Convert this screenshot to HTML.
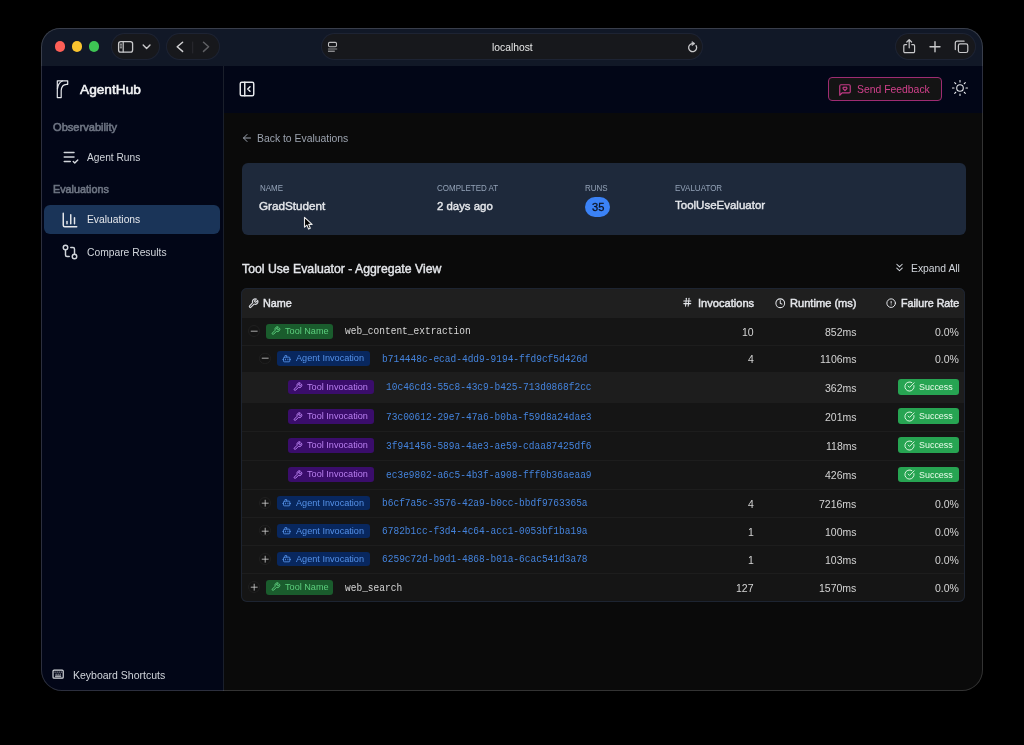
<!DOCTYPE html>
<html><head><meta charset="utf-8">
<style>
*{box-sizing:border-box;margin:0;padding:0}
html,body{width:1024px;height:745px;background:#000;overflow:hidden;font-family:"Liberation Sans",sans-serif}
.a{position:absolute}
.t{position:absolute;white-space:nowrap;line-height:1;will-change:transform}
.m{font-family:"Liberation Mono",monospace;transform:scaleY(1.12);transform-origin:0 76%}
svg{position:absolute;overflow:visible}
</style></head><body>

<div class="a" style="left:41px;top:28px;width:942px;height:663px;border-radius:19px 19px 21px 21px;overflow:hidden;background:#0a0a0a">
<div class="a" style="left:-41px;top:-28px;width:1024px;height:745px">
<div class="a" style="left:0;top:28px;width:1024px;height:38px;background:#111827"></div>
<div class="a" style="left:54.7px;top:41.45px;width:10.6px;height:10.6px;border-radius:6px;background:#fe5f57"></div>
<div class="a" style="left:71.7px;top:41.45px;width:10.6px;height:10.6px;border-radius:6px;background:#f9c32f"></div>
<div class="a" style="left:88.7px;top:41.45px;width:10.6px;height:10.6px;border-radius:6px;background:#3ec454"></div>
<div class="a" style="left:112px;top:34px;width:47px;height:25px;border-radius:12.5px;background:#17181c;box-shadow:0 0 0 1px #1d2333"></div>
<div class="a" style="left:166.5px;top:34px;width:52.5px;height:25px;border-radius:12.5px;background:#17181c;box-shadow:0 0 0 1px #1d2333"></div>
<div class="a" style="left:322px;top:34px;width:380px;height:25px;border-radius:12.5px;background:#17181c;box-shadow:0 0 0 1px #1d2333"></div>
<div class="a" style="left:896px;top:34px;width:79px;height:25px;border-radius:12.5px;background:#17181c;box-shadow:0 0 0 1px #1d2333"></div>
<svg style="left:0;top:0" width="1024" height="70" viewBox="0 0 1024 70" fill="none" stroke-linecap="round" stroke-linejoin="round"><rect x="118.6" y="41.6" width="14" height="10.6" rx="2.2" stroke="#c9c9cb" stroke-width="1.3"/><path d="M123.2 41.8v10.2" stroke="#c9c9cb" stroke-width="1.2"/><path d="M120.2 44.2h1.4M120.2 46h1.4M120.2 47.8h1.4" stroke="#c9c9cb" stroke-width="0.9"/><path d="M143.2 45 146.6 48.4 150 45" stroke="#c9c9cb" stroke-width="1.4"/><path d="M182.6 42.2 177.2 46.8 182.6 51.4" stroke="#d0d0d2" stroke-width="1.5"/><path d="M192.7 42v11" stroke="#2a2b30" stroke-width="1"/><path d="M203.5 42.2 208.6 46.8 203.5 51.4" stroke="#5e5f63" stroke-width="1.5"/><rect x="328.5" y="42.4" width="8" height="4.4" rx="1.2" stroke="#bdbdbf" stroke-width="1.1"/><path d="M328.4 49h8.4" stroke="#8e8e90" stroke-width="1"/><path d="M328.4 51.2h6" stroke="#bdbdbf" stroke-width="1"/><path d="M696.1 45.6A4 4 0 1 1 692.6 43.6" stroke="#c9c9cb" stroke-width="1.3"/><path d="M692.3 41.7 695 43.6 692.3 45.5Z" fill="#c9c9cb" stroke="#c9c9cb" stroke-width="0.6"/><path d="M906.6 44.6h-1.6a1.2 1.2 0 0 0-1.2 1.2v5.6a1.2 1.2 0 0 0 1.2 1.2h8.4a1.2 1.2 0 0 0 1.2-1.2v-5.6a1.2 1.2 0 0 0-1.2-1.2h-1.6" stroke="#c9c9cb" stroke-width="1.2"/><path d="M909.2 47.8V39.8M906.8 42 909.2 39.6 911.6 42" stroke="#c9c9cb" stroke-width="1.2"/><path d="M935 41.8v10M930 46.8h10" stroke="#c9c9cb" stroke-width="1.4"/><rect x="958.4" y="43.9" width="9.4" height="8.6" rx="1.8" stroke="#c9c9cb" stroke-width="1.2"/><path d="M955.3 49.6v-6.4a2 2 0 0 1 2-2h6.8" stroke="#c9c9cb" stroke-width="1.2"/></svg>
<div class="t" style="left:492.30px;top:42.95px;font-size:10.3px;color:#e8e8e8">localhost</div>
<div class="a" style="left:41px;top:66px;width:182px;height:625px;background:#020617"></div>
<div class="a" style="left:223px;top:66px;width:1px;height:625px;background:#1a1f2b"></div>
<svg style="left:0;top:0" width="100" height="100" viewBox="0 0 100 100" fill="none" stroke="#e5e7eb" stroke-width="1.2" stroke-linejoin="round" stroke-linecap="round"><path d="M57.3 97.6V80.8H67.7V84.3H66.5Q61.6 84.6 61.2 90.5V97.6Z"/><path d="M57.5 88.5Q58.3 82.6 62.3 81" stroke-width="1.3"/></svg>
<div class="t" style="left:79.60px;top:83.36px;font-size:13.7px;-webkit-text-stroke:0.55px #f3f4f6;color:#f3f4f6">AgentHub</div>
<div class="t" style="left:52.60px;top:122.06px;font-size:11.1px;-webkit-text-stroke:0.6px #6e7583;color:#6e7583">Observability</div>
<svg style="left:61.5px;top:147.5px;color:#d1d5db" width="18" height="18" viewBox="0 0 24 24" fill="none" stroke="currentColor" stroke-width="1.95" stroke-linecap="round" stroke-linejoin="round"><path d="M11 18H3"/><path d="m15 18 2 2 4-4"/><path d="M16 12H3"/><path d="M16 6H3"/></svg>
<div class="t" style="left:86.60px;top:152.83px;font-size:10.2px;color:#d1d5db">Agent Runs</div>
<div class="t" style="left:52.80px;top:184.22px;font-size:10.8px;-webkit-text-stroke:0.6px #6e7583;color:#6e7583">Evaluations</div>
<div class="a" style="left:44px;top:205px;width:175.5px;height:29px;border-radius:6px;background:#1a3458"></div>
<svg style="left:61.1px;top:210.5px;color:#e5e7eb" width="18" height="18" viewBox="0 0 24 24" fill="none" stroke="currentColor" stroke-width="1.95" stroke-linecap="round" stroke-linejoin="round"><path d="M3 3v16a2 2 0 0 0 2 2h16"/><path d="M18 17V9"/><path d="M13 17V5"/><path d="M8 17v-3"/></svg>
<div class="t" style="left:86.60px;top:215.44px;font-size:10.3px;color:#e5e7eb">Evaluations</div>
<svg style="left:61.1px;top:242.6px;color:#d1d5db" width="18" height="18" viewBox="0 0 24 24" fill="none" stroke="currentColor" stroke-width="1.95" stroke-linecap="round" stroke-linejoin="round"><circle cx="18" cy="18" r="3"/><circle cx="6" cy="6" r="3"/><path d="M13 6h3a2 2 0 0 1 2 2v7"/><path d="M11 18H8a2 2 0 0 1-2-2V9"/></svg>
<div class="t" style="left:86.60px;top:247.84px;font-size:10.3px;color:#d1d5db">Compare Results</div>
<svg style="left:52.4px;top:667.8px;color:#dadde2" width="12.25" height="12.25" viewBox="0 0 24 24" fill="none" stroke="currentColor" stroke-width="2.3" stroke-linecap="round" stroke-linejoin="round"><path d="M10 8h.01"/><path d="M12 12h.01"/><path d="M14 8h.01"/><path d="M16 12h.01"/><path d="M18 8h.01"/><path d="M6 8h.01"/><path d="M7 16h10"/><path d="M8 12h.01"/><rect width="20" height="16" x="2" y="4" rx="2"/></svg>
<div class="t" style="left:73.20px;top:670.18px;font-size:10.5px;color:#d1d5db">Keyboard Shortcuts</div>
<div class="a" style="left:224px;top:66px;width:760px;height:47px;background:#020617"></div>
<svg style="left:238.2px;top:79.6px;color:#e5e7eb" width="18" height="18" viewBox="0 0 24 24" fill="none" stroke="currentColor" stroke-width="1.95" stroke-linecap="round" stroke-linejoin="round"><rect width="18" height="18" x="3" y="3" rx="2"/><path d="M9 3v18"/><path d="m16 15-3-3 3-3"/></svg>
<div class="a" style="left:828px;top:77px;width:114px;height:24px;border-radius:4px;background:#141414;border:1px solid #9e2c72"></div>
<svg style="left:838.3px;top:82.6px;color:#c43a86" width="14" height="14" viewBox="0 0 24 24" fill="none" stroke="currentColor" stroke-width="2" stroke-linecap="round" stroke-linejoin="round"><path d="M21 15a2 2 0 0 1-2 2H7l-4 4V5a2 2 0 0 1 2-2h14a2 2 0 0 1 2 2z"/><path d="M14.8 7.5a1.84 1.84 0 0 0-2.6 0l-.2.3-.3-.3a1.84 1.84 0 1 0-2.4 2.8L12 13l2.7-2.7c.9-.9.8-2.1.1-2.8"/></svg>
<div class="t" style="left:857.30px;top:84.86px;font-size:10.4px;color:#d0408b">Send Feedback</div>
<svg style="left:950.5px;top:79.45px;color:#e5e7eb" width="18" height="18" viewBox="0 0 24 24" fill="none" stroke="currentColor" stroke-width="1.45" stroke-linecap="round" stroke-linejoin="round"><circle cx="12" cy="12" r="4.4"/><path d="M12 2v2"/><path d="M12 20v2"/><path d="m4.93 4.93 1.41 1.41"/><path d="m17.66 17.66 1.41 1.41"/><path d="M2 12h2"/><path d="M20 12h2"/><path d="m6.34 17.66-1.41 1.41"/><path d="m19.07 4.93-1.41 1.41"/></svg>
<svg style="left:240.8px;top:132.4px;color:#9ca3af" width="12" height="12" viewBox="0 0 24 24" fill="none" stroke="currentColor" stroke-width="2" stroke-linecap="round" stroke-linejoin="round"><path d="m12 19-7-7 7-7"/><path d="M19 12H5"/></svg>
<div class="t" style="left:257.30px;top:133.76px;font-size:10.4px;color:#9ca3af">Back to Evaluations</div>
<div class="a" style="left:241.5px;top:163.2px;width:724px;height:72px;border-radius:6px;background:#1e293b"></div>
<div class="t" style="left:259.50px;top:185.10px;font-size:8.0px;color:#94a3b8;transform:scaleY(1.14);transform-origin:0 85%">NAME</div>
<div class="t" style="left:437.40px;top:185.10px;font-size:8.0px;color:#94a3b8;transform:scaleY(1.14);transform-origin:0 85%">COMPLETED AT</div>
<div class="t" style="left:585.40px;top:185.10px;font-size:8.0px;color:#94a3b8;transform:scaleY(1.14);transform-origin:0 85%">RUNS</div>
<div class="t" style="left:674.70px;top:185.10px;font-size:8.0px;color:#94a3b8;transform:scaleY(1.14);transform-origin:0 85%">EVALUATOR</div>
<div class="t" style="left:259.40px;top:200.25px;font-size:11.7px;-webkit-text-stroke:0.4px #e5e7eb;color:#e5e7eb">GradStudent</div>
<div class="t" style="left:437.40px;top:200.51px;font-size:11.4px;-webkit-text-stroke:0.4px #e5e7eb;color:#e5e7eb">2 days ago</div>
<div class="t" style="left:674.60px;top:200.42px;font-size:11.5px;-webkit-text-stroke:0.4px #e5e7eb;color:#e5e7eb">ToolUseEvaluator</div>
<div class="a" style="left:585.3px;top:196.8px;width:24.9px;height:20.4px;border-radius:10.2px;background:#3b82f6"></div>
<div class="t" style="left:591.80px;top:202.26px;font-size:11.1px;-webkit-text-stroke:0.3px #0b1220;color:#0b1220">35</div>
<svg style="left:0;top:0" width="400" height="260" viewBox="0 0 400 260"><path d="M304.5 217.3V227.2L306.9 225.1 308.6 229.1 310.3 228.3 308.7 224.4H312.1Z" fill="#000" stroke="#e8e8e8" stroke-width="1.1" stroke-linejoin="round"/></svg>
<div class="t" style="left:242.40px;top:262.89px;font-size:12.25px;-webkit-text-stroke:0.4px #e5e7eb;color:#e5e7eb">Tool Use Evaluator - Aggregate View</div>
<svg style="left:893.2px;top:261.3px;color:#d1d5db" width="13" height="13" viewBox="0 0 24 24" fill="none" stroke="currentColor" stroke-width="1.9" stroke-linecap="round" stroke-linejoin="round"><path d="m7 6 5 5 5-5"/><path d="m7 13 5 5 5-5"/></svg>
<div class="t" style="left:910.60px;top:263.80px;font-size:10.35px;color:#d1d5db">Expand All</div>
<div class="a" style="left:241.3px;top:288px;width:724.0px;height:313.6px;border-radius:6px;background:#151515;overflow:hidden">
<div class="a" style="left:0;top:0;width:100%;height:30px;background:#1f1f1f"></div>
<div class="a" style="left:0;top:84.30000000000001px;width:100%;height:30.099999999999966px;background:#1d1d1d"></div>
<div class="a" style="left:0;top:56.69999999999999px;width:100%;height:1px;background:#1d1d1d"></div>
<div class="a" style="left:0;top:83.80000000000001px;width:100%;height:1px;background:#1d1d1d"></div>
<div class="a" style="left:0;top:113.89999999999998px;width:100%;height:1px;background:#1d1d1d"></div>
<div class="a" style="left:0;top:142.7px;width:100%;height:1px;background:#1d1d1d"></div>
<div class="a" style="left:0;top:172.0px;width:100%;height:1px;background:#1d1d1d"></div>
<div class="a" style="left:0;top:201.0px;width:100%;height:1px;background:#1d1d1d"></div>
<div class="a" style="left:0;top:228.79999999999995px;width:100%;height:1px;background:#1d1d1d"></div>
<div class="a" style="left:0;top:256.70000000000005px;width:100%;height:1px;background:#1d1d1d"></div>
<div class="a" style="left:0;top:285.20000000000005px;width:100%;height:1px;background:#1d1d1d"></div>
</div>
<div class="a" style="left:241.3px;top:288px;width:724.0px;height:313.6px;border-radius:6px;box-shadow:inset 0 0 0 1px #1d2431"></div>
<svg style="left:247.7px;top:297.8px;color:#d4d6da" width="10.8" height="10.8" viewBox="0 0 24 24" fill="none" stroke="currentColor" stroke-width="2.6" stroke-linecap="round" stroke-linejoin="round"><path d="M14.7 6.3a1 1 0 0 0 0 1.4l1.6 1.6a1 1 0 0 0 1.4 0l3.77-3.77a6 6 0 0 1-7.94 7.94l-6.91 6.91a2.12 2.12 0 0 1-3-3l6.91-6.91a6 6 0 0 1 7.94-7.94l-3.76 3.76z"/></svg>
<div class="t" style="left:262.80px;top:298.32px;font-size:10.8px;-webkit-text-stroke:0.45px #e5e7eb;color:#e5e7eb">Name</div>
<svg style="left:682.0px;top:297.2px;color:#e5e7eb" width="10.6" height="10.6" viewBox="0 0 24 24" fill="none" stroke="currentColor" stroke-width="2.3" stroke-linecap="round" stroke-linejoin="round"><line x1="4" x2="20" y1="9" y2="9"/><line x1="4" x2="20" y1="15" y2="15"/><line x1="10" x2="8" y1="3" y2="21"/><line x1="16" x2="14" y1="3" y2="21"/></svg>
<div class="t" style="right:270.20px;top:298.06px;font-size:11.1px;-webkit-text-stroke:0.45px #e5e7eb;color:#e5e7eb">Invocations</div>
<svg style="left:775.1px;top:297.6px;color:#e5e7eb" width="10.5" height="10.5" viewBox="0 0 24 24" fill="none" stroke="currentColor" stroke-width="2.3" stroke-linecap="round" stroke-linejoin="round"><circle cx="12" cy="12" r="10"/><polyline points="12 6 12 12 16 14"/></svg>
<div class="t" style="right:167.70px;top:298.06px;font-size:11.1px;-webkit-text-stroke:0.45px #e5e7eb;color:#e5e7eb">Runtime (ms)</div>
<svg style="left:886.4px;top:297.75px;color:#e5e7eb" width="10.3" height="10.3" viewBox="0 0 24 24" fill="none" stroke="currentColor" stroke-width="2.3" stroke-linecap="round" stroke-linejoin="round"><circle cx="12" cy="12" r="10"/><line x1="12" x2="12" y1="8" y2="12"/><line x1="12" x2="12.01" y1="16" y2="16"/></svg>
<div class="t" style="right:65.10px;top:298.40px;font-size:10.7px;-webkit-text-stroke:0.45px #e5e7eb;color:#e5e7eb">Failure Rate</div>
<div class="a" style="left:248.3px;top:325.40px;width:11.6px;height:11.4px;border-radius:6px;border:1px solid #202020;background:#141414"></div><svg style="left:248.9px;top:325.90000000000003px;color:#d4d4d4" width="10.4" height="10.4" viewBox="0 0 24 24" fill="none" stroke="currentColor" stroke-width="1.8" stroke-linecap="round" stroke-linejoin="round"><path d="M5 12h14"/></svg>
<div class="a" style="left:266.4px;top:323.90px;width:67.1px;height:14.7px;border-radius:3px;background:#1a5c2d"></div><svg style="left:271.4px;top:326.3px;color:#5cce7d" width="9.6" height="9.6" viewBox="0 0 24 24" fill="none" stroke="currentColor" stroke-width="2.5" stroke-linecap="round" stroke-linejoin="round"><path d="M14.7 6.3a1 1 0 0 0 0 1.4l1.6 1.6a1 1 0 0 0 1.4 0l3.77-3.77a6 6 0 0 1-7.94 7.94l-6.91 6.91a2.12 2.12 0 0 1-3-3l6.91-6.91a6 6 0 0 1 7.94-7.94l-3.76 3.76z"/></svg><div class="t" style="left:285.40px;top:327.02px;font-size:9.15px;color:#5cce7d">Tool Name</div>
<div class="t m" style="left:345.20px;top:327.46px;font-size:9.52px;color:#d6d6d6">web_content_extraction</div>
<div class="t" style="right:270.10px;top:326.88px;font-size:10.5px;color:#d4d4d4">10</div>
<div class="t" style="right:167.60px;top:326.88px;font-size:10.5px;color:#d4d4d4">852ms</div>
<div class="t" style="right:65.10px;top:326.88px;font-size:10.5px;color:#d4d4d4">0.0%</div>
<div class="a" style="left:259.2px;top:352.55px;width:11.6px;height:11.4px;border-radius:6px;border:1px solid #202020;background:#141414"></div><svg style="left:259.8px;top:353.05px;color:#d4d4d4" width="10.4" height="10.4" viewBox="0 0 24 24" fill="none" stroke="currentColor" stroke-width="1.8" stroke-linecap="round" stroke-linejoin="round"><path d="M5 12h14"/></svg>
<div class="a" style="left:277.2px;top:351.05px;width:92.4px;height:14.7px;border-radius:3px;background:#08275e"></div><svg style="left:282.2px;top:353.55px;color:#5591e8" width="9.4" height="9.4" viewBox="0 0 24 24" fill="none" stroke="currentColor" stroke-width="2.2" stroke-linecap="round" stroke-linejoin="round"><path d="M12 8V4H8"/><rect width="16" height="12" x="4" y="8" rx="2"/><path d="M2 14h2"/><path d="M20 14h2"/><path d="M15 13v2"/><path d="M9 13v2"/></svg><div class="t" style="left:296.20px;top:354.17px;font-size:9.15px;color:#5591e8">Agent Invocation</div>
<div class="t m" style="left:381.90px;top:354.61px;font-size:9.52px;color:#4483dc">b714448c-ecad-4dd9-9194-ffd9cf5d426d</div>
<div class="t" style="right:270.10px;top:354.03px;font-size:10.5px;color:#d4d4d4">4</div>
<div class="t" style="right:167.60px;top:354.03px;font-size:10.5px;color:#d4d4d4">1106ms</div>
<div class="t" style="right:65.10px;top:354.03px;font-size:10.5px;color:#d4d4d4">0.0%</div>
<div class="a" style="left:288.2px;top:379.65px;width:85.7px;height:14.7px;border-radius:3px;background:#3a0d6b"></div><svg style="left:293.2px;top:382.05px;color:#b97ff0" width="9.6" height="9.6" viewBox="0 0 24 24" fill="none" stroke="currentColor" stroke-width="2.5" stroke-linecap="round" stroke-linejoin="round"><path d="M14.7 6.3a1 1 0 0 0 0 1.4l1.6 1.6a1 1 0 0 0 1.4 0l3.77-3.77a6 6 0 0 1-7.94 7.94l-6.91 6.91a2.12 2.12 0 0 1-3-3l6.91-6.91a6 6 0 0 1 7.94-7.94l-3.76 3.76z"/></svg><div class="t" style="left:307.20px;top:382.77px;font-size:9.15px;color:#b97ff0">Tool Invocation</div>
<div class="t m" style="left:386.40px;top:383.21px;font-size:9.52px;color:#4483dc">10c46cd3-55c8-43c9-b425-713d0868f2cc</div>
<div class="t" style="right:167.60px;top:382.63px;font-size:10.5px;color:#d4d4d4">362ms</div>
<div class="a" style="left:897.9px;top:378.95px;width:61.1px;height:15.9px;border-radius:3px;background:#27a452"></div><svg style="left:903.7px;top:381.35px;color:#e8fbe9" width="11" height="11" viewBox="0 0 24 24" fill="none" stroke="currentColor" stroke-width="2" stroke-linecap="round" stroke-linejoin="round"><path d="M21.801 10A10 10 0 1 1 17 3.335"/><path d="m9 11 3 3L22 4"/></svg><div class="t" style="left:918.50px;top:382.94px;font-size:8.95px;color:#e8fbe9">Success</div>
<div class="a" style="left:288.2px;top:409.10px;width:85.7px;height:14.7px;border-radius:3px;background:#3a0d6b"></div><svg style="left:293.2px;top:411.49999999999994px;color:#b97ff0" width="9.6" height="9.6" viewBox="0 0 24 24" fill="none" stroke="currentColor" stroke-width="2.5" stroke-linecap="round" stroke-linejoin="round"><path d="M14.7 6.3a1 1 0 0 0 0 1.4l1.6 1.6a1 1 0 0 0 1.4 0l3.77-3.77a6 6 0 0 1-7.94 7.94l-6.91 6.91a2.12 2.12 0 0 1-3-3l6.91-6.91a6 6 0 0 1 7.94-7.94l-3.76 3.76z"/></svg><div class="t" style="left:307.20px;top:412.22px;font-size:9.15px;color:#b97ff0">Tool Invocation</div>
<div class="t m" style="left:386.40px;top:412.66px;font-size:9.52px;color:#4483dc">73c00612-29e7-47a6-b0ba-f59d8a24dae3</div>
<div class="t" style="right:167.60px;top:412.07px;font-size:10.5px;color:#d4d4d4">201ms</div>
<div class="a" style="left:897.9px;top:408.40px;width:61.1px;height:15.9px;border-radius:3px;background:#27a452"></div><svg style="left:903.7px;top:410.79999999999995px;color:#e8fbe9" width="11" height="11" viewBox="0 0 24 24" fill="none" stroke="currentColor" stroke-width="2" stroke-linecap="round" stroke-linejoin="round"><path d="M21.801 10A10 10 0 1 1 17 3.335"/><path d="m9 11 3 3L22 4"/></svg><div class="t" style="left:918.50px;top:412.39px;font-size:8.95px;color:#e8fbe9">Success</div>
<div class="a" style="left:288.2px;top:438.15px;width:85.7px;height:14.7px;border-radius:3px;background:#3a0d6b"></div><svg style="left:293.2px;top:440.55px;color:#b97ff0" width="9.6" height="9.6" viewBox="0 0 24 24" fill="none" stroke="currentColor" stroke-width="2.5" stroke-linecap="round" stroke-linejoin="round"><path d="M14.7 6.3a1 1 0 0 0 0 1.4l1.6 1.6a1 1 0 0 0 1.4 0l3.77-3.77a6 6 0 0 1-7.94 7.94l-6.91 6.91a2.12 2.12 0 0 1-3-3l6.91-6.91a6 6 0 0 1 7.94-7.94l-3.76 3.76z"/></svg><div class="t" style="left:307.20px;top:441.27px;font-size:9.15px;color:#b97ff0">Tool Invocation</div>
<div class="t m" style="left:386.40px;top:441.71px;font-size:9.52px;color:#4483dc">3f941456-589a-4ae3-ae59-cdaa87425df6</div>
<div class="t" style="right:167.60px;top:441.13px;font-size:10.5px;color:#d4d4d4">118ms</div>
<div class="a" style="left:897.9px;top:437.45px;width:61.1px;height:15.9px;border-radius:3px;background:#27a452"></div><svg style="left:903.7px;top:439.85px;color:#e8fbe9" width="11" height="11" viewBox="0 0 24 24" fill="none" stroke="currentColor" stroke-width="2" stroke-linecap="round" stroke-linejoin="round"><path d="M21.801 10A10 10 0 1 1 17 3.335"/><path d="m9 11 3 3L22 4"/></svg><div class="t" style="left:918.50px;top:441.44px;font-size:8.95px;color:#e8fbe9">Success</div>
<div class="a" style="left:288.2px;top:467.30px;width:85.7px;height:14.7px;border-radius:3px;background:#3a0d6b"></div><svg style="left:293.2px;top:469.7px;color:#b97ff0" width="9.6" height="9.6" viewBox="0 0 24 24" fill="none" stroke="currentColor" stroke-width="2.5" stroke-linecap="round" stroke-linejoin="round"><path d="M14.7 6.3a1 1 0 0 0 0 1.4l1.6 1.6a1 1 0 0 0 1.4 0l3.77-3.77a6 6 0 0 1-7.94 7.94l-6.91 6.91a2.12 2.12 0 0 1-3-3l6.91-6.91a6 6 0 0 1 7.94-7.94l-3.76 3.76z"/></svg><div class="t" style="left:307.20px;top:470.42px;font-size:9.15px;color:#b97ff0">Tool Invocation</div>
<div class="t m" style="left:386.40px;top:470.86px;font-size:9.52px;color:#4483dc">ec3e9802-a6c5-4b3f-a908-fff0b36aeaa9</div>
<div class="t" style="right:167.60px;top:470.28px;font-size:10.5px;color:#d4d4d4">426ms</div>
<div class="a" style="left:897.9px;top:466.60px;width:61.1px;height:15.9px;border-radius:3px;background:#27a452"></div><svg style="left:903.7px;top:469.0px;color:#e8fbe9" width="11" height="11" viewBox="0 0 24 24" fill="none" stroke="currentColor" stroke-width="2" stroke-linecap="round" stroke-linejoin="round"><path d="M21.801 10A10 10 0 1 1 17 3.335"/><path d="m9 11 3 3L22 4"/></svg><div class="t" style="left:918.50px;top:470.59px;font-size:8.95px;color:#e8fbe9">Success</div>
<div class="a" style="left:259.2px;top:497.20px;width:11.6px;height:11.4px;border-radius:6px;border:1px solid #202020;background:#141414"></div><svg style="left:259.8px;top:497.7px;color:#d4d4d4" width="10.4" height="10.4" viewBox="0 0 24 24" fill="none" stroke="currentColor" stroke-width="1.8" stroke-linecap="round" stroke-linejoin="round"><path d="M5 12h14"/><path d="M12 5v14"/></svg>
<div class="a" style="left:277.2px;top:495.70px;width:92.4px;height:14.7px;border-radius:3px;background:#08275e"></div><svg style="left:282.2px;top:498.2px;color:#5591e8" width="9.4" height="9.4" viewBox="0 0 24 24" fill="none" stroke="currentColor" stroke-width="2.2" stroke-linecap="round" stroke-linejoin="round"><path d="M12 8V4H8"/><rect width="16" height="12" x="4" y="8" rx="2"/><path d="M2 14h2"/><path d="M20 14h2"/><path d="M15 13v2"/><path d="M9 13v2"/></svg><div class="t" style="left:296.20px;top:498.82px;font-size:9.15px;color:#5591e8">Agent Invocation</div>
<div class="t m" style="left:381.90px;top:499.26px;font-size:9.52px;color:#4483dc">b6cf7a5c-3576-42a9-b0cc-bbdf9763365a</div>
<div class="t" style="right:270.10px;top:498.68px;font-size:10.5px;color:#d4d4d4">4</div>
<div class="t" style="right:167.60px;top:498.68px;font-size:10.5px;color:#d4d4d4">7216ms</div>
<div class="t" style="right:65.10px;top:498.68px;font-size:10.5px;color:#d4d4d4">0.0%</div>
<div class="a" style="left:259.2px;top:525.05px;width:11.6px;height:11.4px;border-radius:6px;border:1px solid #202020;background:#141414"></div><svg style="left:259.8px;top:525.55px;color:#d4d4d4" width="10.4" height="10.4" viewBox="0 0 24 24" fill="none" stroke="currentColor" stroke-width="1.8" stroke-linecap="round" stroke-linejoin="round"><path d="M5 12h14"/><path d="M12 5v14"/></svg>
<div class="a" style="left:277.2px;top:523.55px;width:92.4px;height:14.7px;border-radius:3px;background:#08275e"></div><svg style="left:282.2px;top:526.05px;color:#5591e8" width="9.4" height="9.4" viewBox="0 0 24 24" fill="none" stroke="currentColor" stroke-width="2.2" stroke-linecap="round" stroke-linejoin="round"><path d="M12 8V4H8"/><rect width="16" height="12" x="4" y="8" rx="2"/><path d="M2 14h2"/><path d="M20 14h2"/><path d="M15 13v2"/><path d="M9 13v2"/></svg><div class="t" style="left:296.20px;top:526.67px;font-size:9.15px;color:#5591e8">Agent Invocation</div>
<div class="t m" style="left:381.90px;top:527.11px;font-size:9.52px;color:#4483dc">6782b1cc-f3d4-4c64-acc1-0053bf1ba19a</div>
<div class="t" style="right:270.10px;top:526.53px;font-size:10.5px;color:#d4d4d4">1</div>
<div class="t" style="right:167.60px;top:526.53px;font-size:10.5px;color:#d4d4d4">100ms</div>
<div class="t" style="right:65.10px;top:526.53px;font-size:10.5px;color:#d4d4d4">0.0%</div>
<div class="a" style="left:259.2px;top:553.25px;width:11.6px;height:11.4px;border-radius:6px;border:1px solid #202020;background:#141414"></div><svg style="left:259.8px;top:553.75px;color:#d4d4d4" width="10.4" height="10.4" viewBox="0 0 24 24" fill="none" stroke="currentColor" stroke-width="1.8" stroke-linecap="round" stroke-linejoin="round"><path d="M5 12h14"/><path d="M12 5v14"/></svg>
<div class="a" style="left:277.2px;top:551.75px;width:92.4px;height:14.7px;border-radius:3px;background:#08275e"></div><svg style="left:282.2px;top:554.25px;color:#5591e8" width="9.4" height="9.4" viewBox="0 0 24 24" fill="none" stroke="currentColor" stroke-width="2.2" stroke-linecap="round" stroke-linejoin="round"><path d="M12 8V4H8"/><rect width="16" height="12" x="4" y="8" rx="2"/><path d="M2 14h2"/><path d="M20 14h2"/><path d="M15 13v2"/><path d="M9 13v2"/></svg><div class="t" style="left:296.20px;top:554.87px;font-size:9.15px;color:#5591e8">Agent Invocation</div>
<div class="t m" style="left:381.90px;top:555.31px;font-size:9.52px;color:#4483dc">6259c72d-b9d1-4868-b01a-6cac541d3a78</div>
<div class="t" style="right:270.10px;top:554.73px;font-size:10.5px;color:#d4d4d4">1</div>
<div class="t" style="right:167.60px;top:554.73px;font-size:10.5px;color:#d4d4d4">103ms</div>
<div class="t" style="right:65.10px;top:554.73px;font-size:10.5px;color:#d4d4d4">0.0%</div>
<div class="a" style="left:248.3px;top:581.45px;width:11.6px;height:11.4px;border-radius:6px;border:1px solid #202020;background:#141414"></div><svg style="left:248.9px;top:581.95px;color:#d4d4d4" width="10.4" height="10.4" viewBox="0 0 24 24" fill="none" stroke="currentColor" stroke-width="1.8" stroke-linecap="round" stroke-linejoin="round"><path d="M5 12h14"/><path d="M12 5v14"/></svg>
<div class="a" style="left:266.4px;top:579.95px;width:67.1px;height:14.7px;border-radius:3px;background:#1a5c2d"></div><svg style="left:271.4px;top:582.3500000000001px;color:#5cce7d" width="9.6" height="9.6" viewBox="0 0 24 24" fill="none" stroke="currentColor" stroke-width="2.5" stroke-linecap="round" stroke-linejoin="round"><path d="M14.7 6.3a1 1 0 0 0 0 1.4l1.6 1.6a1 1 0 0 0 1.4 0l3.77-3.77a6 6 0 0 1-7.94 7.94l-6.91 6.91a2.12 2.12 0 0 1-3-3l6.91-6.91a6 6 0 0 1 7.94-7.94l-3.76 3.76z"/></svg><div class="t" style="left:285.40px;top:583.07px;font-size:9.15px;color:#5cce7d">Tool Name</div>
<div class="t m" style="left:345.20px;top:583.51px;font-size:9.52px;color:#d6d6d6">web_search</div>
<div class="t" style="right:270.10px;top:582.93px;font-size:10.5px;color:#d4d4d4">127</div>
<div class="t" style="right:167.60px;top:582.93px;font-size:10.5px;color:#d4d4d4">1570ms</div>
<div class="t" style="right:65.10px;top:582.93px;font-size:10.5px;color:#d4d4d4">0.0%</div>
</div></div>
<div class="a" style="left:41px;top:28px;width:942px;height:663px;border-radius:19px 19px 21px 21px;box-shadow:inset 0 0 0 1px rgba(255,255,255,0.17)"></div>
</body></html>
